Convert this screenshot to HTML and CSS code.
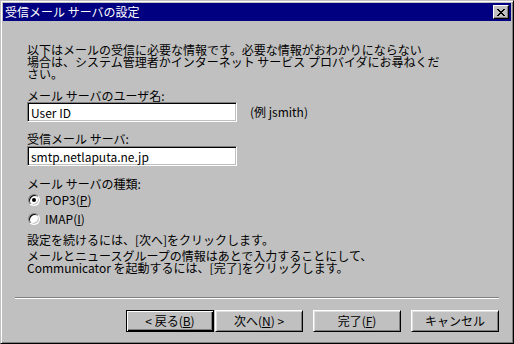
FILE: index.html
```html
<!DOCTYPE html>
<html lang="ja">
<head>
    <meta charset="UTF-8">
    <title>受信メール サーバの設定</title>
    <link rel="stylesheet" href="styles.css">
</head>
<body>

    <div class="window">
        <div class="titlebar">
            <span class="title">受信メール サーバの設定</span>
            <button class="close" type="button">
                <svg width="8" height="7" viewBox="0 0 8 7" shape-rendering="crispEdges">
                    <path d="M0 0h2v1h-2zM6 0h2v1h-2zM1 1h2v1h-2zM5 1h2v1h-2zM2 2h4v1h-4zM3 3h2v1h-2zM2 4h4v1h-4zM1 5h2v1h-2zM5 5h2v1h-2zM0 6h2v1h-2zM6 6h2v1h-2z" fill="#000"/>
                </svg>
            </button>
        </div>

        <div class="content">
            <p class="intro">以下はメールの受信に必要な情報です。必要な情報がおわかりにならない<br>場合は、システム管理者かインターネット サービス プロバイダにお尋ねくだ<br>さい。</p>

            <label class="field-label first" for="userName">メール サーバのユーザ名:</label>
            <div class="field-row">
                <input class="textbox" type="text" id="userName" value="User ID">
                <span class="hint">(例 jsmith)</span>
            </div>

            <label class="field-label second" for="server">受信メール サーバ:</label>
            <div class="field-row second-row">
                <input class="textbox" type="text" id="server" value="smtp.netlaputa.ne.jp">
            </div>

            <div class="group-label">メール サーバの種類:</div>
            <label class="radio"><span class="radio-dot checked"></span>POP3(<u>P</u>)</label>
            <label class="radio"><span class="radio-dot"></span>IMAP(<u>I</u>)</label>

            <p class="note first-note">設定を続けるには、[次へ]をクリックします。</p>
            <p class="note">メールとニュースグループの情報はあとで入力することにして、<br>Communicator を起動するには、[完了]をクリックします。</p>

            <div class="separator"></div>

            <div class="buttons">
                <div class="nav-pair">
                    <button class="btn default" type="button">&lt; 戻る(<u>B</u>)</button>
                    <button class="btn" type="button">次へ(<u>N</u>) &gt;</button>
                </div>
                <button class="btn" type="button">完了(<u>F</u>)</button>
                <button class="btn" type="button">キャンセル</button>
            </div>
        </div>
    </div>

</body>
</html>
```

FILE: styles.css
```css
body {
    margin: 0;
    background-color: #c0c0c0;
    font-family: "Noto Sans CJK JP", sans-serif;
    font-size: 12px;
    color: #000;
}
.window {
    width: 514px;
    height: 344px;
    box-sizing: border-box;
    background-color: #c0c0c0;
    border: 1px solid;
    border-color: #c0c0c0 #000 #000 #c0c0c0;
    box-shadow: inset 1px 1px #fff, inset -1px -1px #808080;
    padding: 2px;
    display: flex;
    flex-direction: column;
}
.titlebar {
    height: 18px;
    background-color: #000080;
    display: flex;
    align-items: center;
    justify-content: space-between;
    padding: 0 2px 0 2px;
}
.title {
    color: #fff;
    line-height: 12px;
}
.close {
    width: 16px;
    height: 14px;
    padding: 0;
    background-color: #c0c0c0;
    border: 1px solid;
    border-color: #fff #000 #000 #fff;
    box-shadow: inset -1px -1px #808080;
    display: flex;
    align-items: center;
    justify-content: center;
}
.content {
    flex: 1;
    display: flex;
    flex-direction: column;
    align-items: flex-start;
    padding: 0 12px 0 24px;
}
.intro, .note, .field-label, .group-label {
    margin: 0;
    line-height: 12px;
}
.intro {
    margin-top: 23px;
}
.field-label.first {
    margin-top: 10px;
}
.field-label.second {
    margin-top: 11px;
}
.field-row {
    display: flex;
    align-items: center;
}
.second-row {
    margin-top: 1px;
}
.textbox {
    width: 210px;
    height: 20px;
    box-sizing: border-box;
    margin: 0;
    padding: 0 3px;
    font-family: "Noto Sans CJK JP", sans-serif;
    font-size: 12px;
    color: #000;
    background-color: #fff;
    border: 1px solid;
    border-color: #808080 #fff #fff #808080;
    box-shadow: inset 1px 1px #000, inset -1px -1px #c0c0c0;
    outline: none;
}
.hint {
    margin-left: 13px;
    line-height: 12px;
}
.group-label {
    margin-top: 12px;
}
.radio {
    height: 19px;
    display: flex;
    align-items: center;
    line-height: 12px;
}
.radio:first-of-type {
    margin-top: 1px;
}
.radio-dot {
    width: 12px;
    height: 12px;
    box-sizing: border-box;
    margin: 0 5px 0 1px;
    border-radius: 50%;
    background-color: #fff;
    border: 1px solid;
    border-color: #808080 #fff #fff #808080;
    box-shadow: inset 1px 1px #000, inset -1px -1px #c0c0c0;
    position: relative;
}
.radio-dot.checked::after {
    content: "";
    position: absolute;
    left: 3px;
    top: 3px;
    width: 4px;
    height: 4px;
    border-radius: 50%;
    background-color: #000;
}
.note.first-note {
    margin-top: 6px;
}
.note {
    margin-top: 4px;
}
.separator {
    align-self: stretch;
    margin: 23px 0 0 -12px;
    height: 1px;
    background-color: #808080;
    border-bottom: 1px solid #fff;
}
.buttons {
    align-self: flex-end;
    margin-top: 11px;
    display: flex;
    gap: 10px;
}
.nav-pair {
    display: flex;
    gap: 1px;
}
.btn {
    width: 88px;
    height: 22px;
    box-sizing: border-box;
    margin: 0;
    padding: 0;
    font-family: "Noto Sans CJK JP", sans-serif;
    font-size: 12px;
    line-height: 12px;
    color: #000;
    background-color: #c0c0c0;
    border: 1px solid;
    border-color: #fff #000 #000 #fff;
    box-shadow: inset 1px 1px #dfdfdf, inset -1px -1px #808080;
}
.btn.default {
    border-color: #000;
    box-shadow: inset 1px 1px #fff, inset -1px -1px #000, inset -2px -2px #808080;
}
```
